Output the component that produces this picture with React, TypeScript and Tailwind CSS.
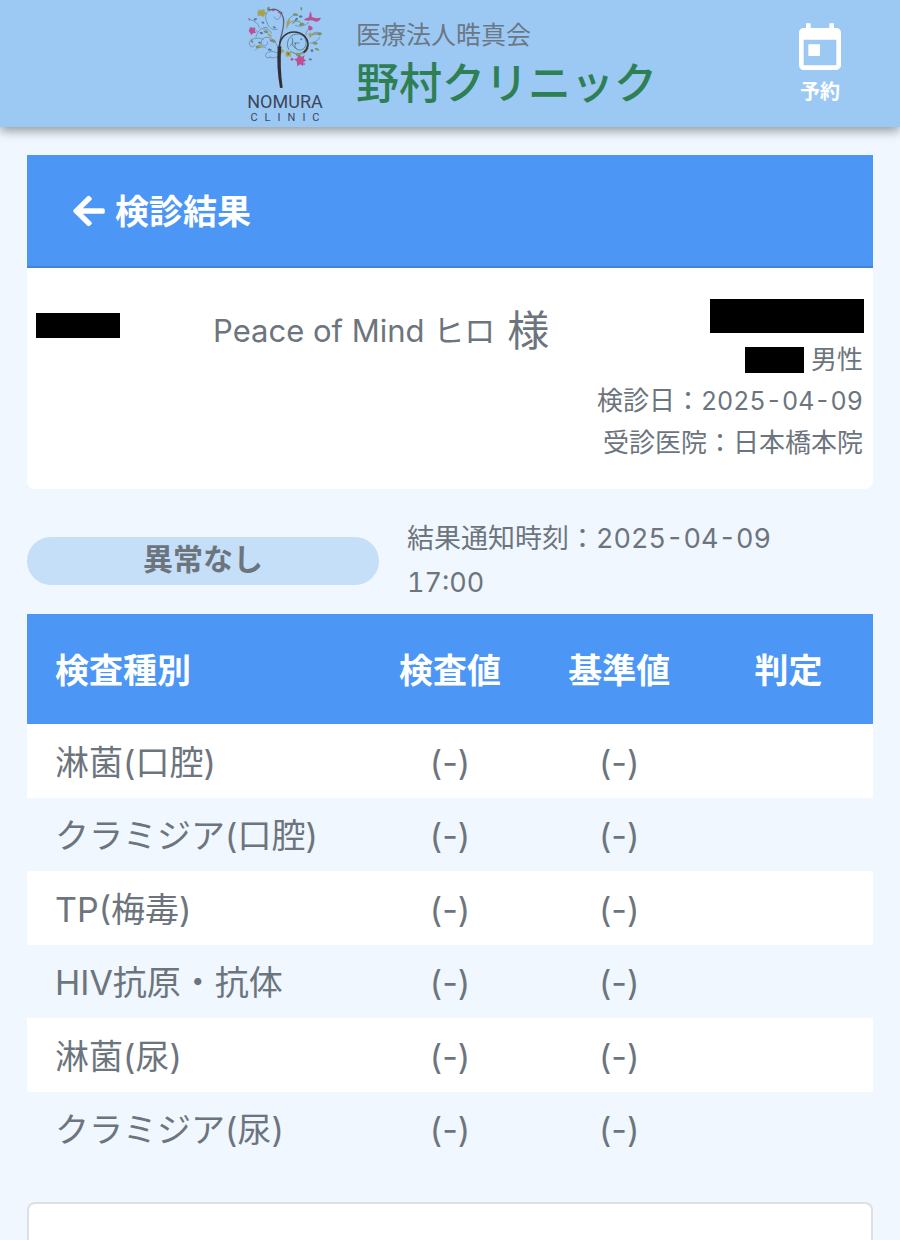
import { FaArrowLeft } from "react-icons/fa"
import { MdToday } from "react-icons/md"

interface ResultRow {
    name: string
    value: string
    reference: string
    judgement: string
}

const results: ResultRow[] = [
    { name: "淋菌(口腔)", value: "(-)", reference: "(-)", judgement: "" },
    { name: "クラミジア(口腔)", value: "(-)", reference: "(-)", judgement: "" },
    { name: "TP(梅毒)", value: "(-)", reference: "(-)", judgement: "" },
    { name: "HIV抗原・抗体", value: "(-)", reference: "(-)", judgement: "" },
    { name: "淋菌(尿)", value: "(-)", reference: "(-)", judgement: "" },
    { name: "クラミジア(尿)", value: "(-)", reference: "(-)", judgement: "" },
]

function TreeLogo() {
    return (
        <svg viewBox="48 15 234 252" className="h-[84px] w-[78px]" fill="none" strokeLinecap="round">
            {/* swirls */}
            <g stroke="#6d8ca3" strokeWidth="2.5">
                <path d="M112 70c-10-18-6-38 14-42 18-4 30 10 24 24-4 9-16 8-17-1" />
                <path d="M146 150c-6-26-22-40-38-38-14 2-18 18-8 24 8 4 16-4 12-11" />
                <path d="M148 162c-14-10-32-10-40 0-6 10 8 16 13 8M100 118c-20-8-42-2-42 14 2 12 16 10 16 2" />
                <path d="M112 70c4 14 18 22 30 18M78 110c4-18 18-30 34-28" />
                <path d="M170 84c4-14 16-24 28-22M196 76c14 6 26 2 40-8M176 60c4-8 10-14 20-16" />
                <path d="M60 84c8-4 16 2 20 10M64 60c10 2 20 10 24 22M124 100c-4-12-14-16-24-12" />
                <path d="M240 112c6-16 22-20 32-10M240 130c12-2 24-8 30-18M228 104c0-12 8-20 20-20" />
                <path d="M120 172c12 4 22 0 28-8M76 150c8-10 22-12 32-6" />
            </g>
            <g stroke="#5f8288" strokeWidth="3">
                <path d="M176 148c-10-18 0-44 24-46 22-2 34 20 26 38-6 12-24 14-30 3-4-9 4-18 12-14" />
                <path d="M182 154c18 14 44 8 50-18M186 114c4 8 2 18-6 24M200 146c-8-2-14-10-12-20" />
            </g>
            <g stroke="#8c9a74" strokeWidth="4">
                <path d="M200 160c14 6 28 0 34-14M240 108c8-6 18-8 28-6M188 70c8-8 18-8 24-2" />
            </g>
            {/* leaves */}
            <g fill="#7b9068">
                <path d="M188 42q12-6 18 4-12 6-18-4zM206 74q10-10 18-2-8 10-18 2zM246 128q14-6 18 4-12 6-18-4z" />
                <path d="M76 140q10-8 16 2-10 6-16-2zM112 32q-4-12 6-12 6 8-6 12zM214 32q-6-8 0-12 6 6 0 12z" />
                <path d="M100 94q10-8 16 2-8 8-16-2zM122 120q12-6 16 6-12 6-16-6zM262 104q6-12 14-4-2 10-14 4z" />
                <path d="M196 162q14-2 20 8-14 4-20-8zM62 118q8 2 8 12-10-2-8-12zM254 144q12-2 14 8-12 0-14-8z" />
            </g>
            <g fill="#5579a3">
                <path d="M88 98q8-6 12 2-6 6-12-2zM194 62q2-12 10-8 0 8-10 8zM70 60q4-10 12-4-4 8-12 4z" />
                <path d="M128 80q8-4 10 4-8 4-10-4zM112 148q8-6 14 2-8 6-14-2zM206 50q8-8 12 0-6 6-12 0z" />
                <path d="M94 66q8-4 10 4-8 4-10-4zM236 176q8-4 10 4-8 4-10-4zM84 126q8-4 10 4-8 4-10-4z" />
                <circle cx="246" cy="152" r="4" />
                <circle cx="196" cy="130" r="3" />
                <circle cx="214" cy="118" r="3" />
            </g>
            {/* blossoms */}
            <g fill="#bd4f94">
                <path d="M56 92l5-10 6 3 9-3-2 9 4 7-9 2-5 5-4-7z" />
                <path d="M200 184l-8-6 10-3 3-9 9 6 10-7-3 11 8 6-9 4-1 12-8-5-9 6z" />
                <path d="M240 34q6 6 5 17l14 4 14-2q-4 12-16 12-12-6-22-3-8 1-14-4l16-6z" />
                <path d="M54 54l8 3-4 6zM236 76l8 3 4 9-8 4-6-6z" />
                <path d="M142 36q12-4 18 4-10 4-18-4zM118 116q8 2 8 10-8-2-8-10z" />
                <circle cx="130" cy="30" r="4" />
                <circle cx="186" cy="178" r="4" />
                <circle cx="222" cy="192" r="3" />
            </g>
            <g fill="#a4a458">
                <path d="M82 38l4-9 9 1 8-3 2 9 6 4-7 5-4 6-8-4-8 1z" />
                <path d="M170 82q-4-16 8-28 6 16-8 28z" />
                <path d="M166 160l4-8 7 3 7 1-2 7 2 7-8-1-7 2z" />
                <path d="M150 152l7-5 6 5-4 7-7-1z" />
                <path d="M234 104l7-7 5 7-6 6zM84 136l10-4 3 8-8 3zM112 100q10 0 14 12-12-2-14-12z" />
            </g>
            <circle cx="95" cy="39" r="3" fill="#c98a35" />
            <circle cx="175" cy="161" r="3" fill="#8a5a20" />
            {/* trunk and the main branches */}
            <path d="M148 140c2-34 18-58 12-86-6-22-22-30-42-24" stroke="#626274" strokeWidth="4" />
            <path d="M148 150c-2-36 20-54 44-54 24 0 42 16 42 40-2 10-6 16-12 20" stroke="#39343c" strokeWidth="5" />
            <path d="M143 140q-4 66 7 124l8-1q-9-64-4-124z" fill="#332e36" />
        </svg>
    )
}

function SiteHeader() {
    return (
        <header className="z-10 grid h-[127px] grid-cols-[1fr_auto_1fr] items-start bg-[#9cc9f4] shadow-[0_4px_10px_rgba(0,0,0,0.38)]">
            <div />
            <div className="flex gap-[32px] pt-[5px] pl-[3px]">
                <div className="flex flex-col items-center text-[#3c4658]">
                    <TreeLogo />
                    <span className="font-['Roboto',sans-serif] text-[18px] leading-[26px]">NOMURA</span>
                    <span className="-mr-[7px] font-['Roboto',sans-serif] text-[11px] leading-[6px] tracking-[7px]">CLINIC</span>
                </div>
                <div className="pt-[15px] font-['Liberation_Serif','Noto_Sans_CJK_JP',serif]">
                    <p className="text-[25px] leading-[32px] text-[#6b7785]">医療法人晧真会</p>
                    <p className="text-[43px] leading-[66px] font-medium text-[#2f7f54]">野村クリニック</p>
                </div>
            </div>
            <button type="button" className="mr-[52px] flex flex-col items-center justify-self-end pt-[21px] text-white">
                <MdToday size={56} />
                <span className="text-[20px] leading-[30px] font-bold">予約</span>
            </button>
        </header>
    )
}

function PatientCard() {
    return (
        <section className="rounded-b-lg bg-white">
            <div className="flex h-[113px] items-center border-b-2 border-[#4584d4] bg-[#4c96f5] px-[46px] text-white">
                <button type="button" className="flex items-center gap-[10px]">
                    <FaArrowLeft className="h-[36px] w-[32px]" />
                    <span className="pt-[2px] text-[34px] leading-[48px] font-bold">検診結果</span>
                </button>
            </div>
            <div className="grid h-[221px] grid-cols-[177px_1fr_auto] items-start px-[9px] pt-[31px]">
                <div className="mt-[14px] h-[25px] w-[84px] bg-black" />
                <p className="flex items-center gap-[12px]">
                    <span className="text-[31px]">Peace of Mind ヒロ</span>
                    <span className="text-[42px] leading-[64px]">様</span>
                </p>
                <div className="flex flex-col items-end text-[26px] leading-[41px]">
                    <div className="mb-[6px] h-[34px] w-[154px] bg-black" />
                    <p className="flex items-center gap-[7px] pr-[1px]">
                        <span className="h-[26px] w-[59px] bg-black" />
                        男性
                    </p>
                    <p className="pr-[1px]">
                        検診日：<time className="text-[25px] tabular-nums">2025-04-09</time>
                    </p>
                    <p className="pr-[1px]">受診医院：日本橋本院</p>
                </div>
            </div>
        </section>
    )
}

function ResultTable() {
    return (
        <table className="w-full table-fixed text-[34px] leading-[48px]">
            <thead>
                <tr className="h-[110px] bg-[#4c96f5] text-white">
                    <th className="w-2/5 px-[28px] pt-[3px] text-left font-bold">検査種別</th>
                    <th className="w-1/5 pt-[3px] font-bold">検査値</th>
                    <th className="w-1/5 pt-[3px] font-bold">基準値</th>
                    <th className="w-1/5 pt-[3px] font-bold">判定</th>
                </tr>
            </thead>
            <tbody>
                {results.map((row) => (
                    <tr key={row.name} className="odd:h-[74px] odd:bg-white even:h-[73px]">
                        <td className="px-[28px] pt-[3px]">{row.name}</td>
                        <td className="pt-[3px] text-center">{row.value}</td>
                        <td className="pt-[3px] text-center">{row.reference}</td>
                        <td className="pt-[3px] text-center">{row.judgement}</td>
                    </tr>
                ))}
            </tbody>
        </table>
    )
}

export default function App() {
    return (
        <div className="flex min-h-screen flex-col bg-[#f0f7fe] font-['Inter','Noto_Sans_CJK_JP',sans-serif] text-[#6c757d]">
            <SiteHeader />
            <main className="flex flex-1 flex-col px-[27px] pt-[28px]">
                <PatientCard />
                <div className="mt-[28px] mb-[9px] flex items-center gap-[28px]">
                    <p className="h-[48px] w-[352px] rounded-full bg-[#c5dff9] text-center text-[30px] leading-[45px] font-bold">
                        異常なし
                    </p>
                    <p className="w-[400px] text-[27px] leading-[44px] tabular-nums">結果通知時刻：2025-04-09 17:00</p>
                </div>
                <ResultTable />
                <section className="mt-[37px] flex-1 rounded-t-lg border-2 border-b-0 border-[#dee0e3] bg-white" />
            </main>
        </div>
    )
}
